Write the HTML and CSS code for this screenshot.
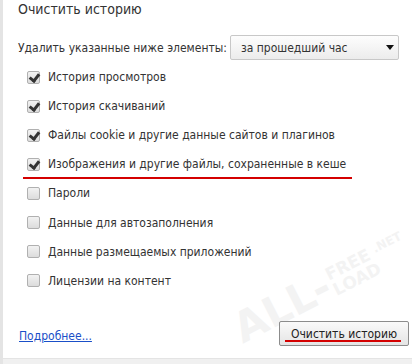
FILE: index.html
```html
<!DOCTYPE html>
<html>
<head>
<meta charset="utf-8">
<link rel="stylesheet" href="styles.css">
</head>
<body>
<div class="frame">
  <div class="dialog">
    <div class="title">Очистить историю</div>
    <div class="range">
      <span class="range-label">Удалить указанные ниже элементы:</span>
      <div class="select"><span>за прошедший час</span><span class="arrow"></span></div>
    </div>
    <ul class="items">
      <li><span class="cb on"></span><span>История просмотров</span></li>
      <li><span class="cb on"></span><span>История скачиваний</span></li>
      <li><span class="cb on"></span><span>Файлы cookie и другие данные сайтов и плагинов</span></li>
      <li class="marked"><span class="cb on"></span><span>Изображения и другие файлы, сохраненные в кеше</span></li>
      <li><span class="cb"></span><span>Пароли</span></li>
      <li><span class="cb"></span><span>Данные для автозаполнения</span></li>
      <li><span class="cb"></span><span>Данные размещаемых приложений</span></li>
      <li><span class="cb"></span><span>Лицензии на контент</span></li>
    </ul>
    <div class="footer">
      <a class="more" href="#">Подробнее...</a>
      <button class="clear"><span>Очистить историю</span></button>
    </div>
    <div class="watermark"><span class="wm-big">ALL-</span><span class="wm-stack"><span>FREE</span><span>LOAD</span></span><span class="wm-net">.NET</span></div>
  </div>
  <div class="bottom"></div>
</div>
</body>
</html>
```
FILE: styles.css
```css
* { box-sizing: border-box; }
html, body { margin: 0; padding: 0; background: #fff; }
body {
  width: 412px; height: 364px; overflow: hidden;
  font-family: "DejaVu Sans Condensed", "DejaVu Sans", sans-serif;
  font-stretch: condensed;
  font-size: 12px; color: #333;
}
.frame { border-left: 3px solid #e4e4e4; height: 364px; display: flex; flex-direction: column; }
.dialog { flex: 1; padding: 0 0 0 15px; position: relative; }
.title { font-size: 14px; color: #333; padding-top: 0; height: 35px; line-height: 18px; }
.range { display: flex; align-items: center; height: 25px; }
.range-label { width: 212px; white-space: nowrap; }
.select {
  width: 169px; height: 25px; border: 1px solid #c8c8c8; border-radius: 2px;
  background: linear-gradient(#fdfdfd, #ececec);
  display: flex; align-items: center; justify-content: space-between; padding: 0 4px 0 10px;
  position: relative; z-index: 1;
}
.arrow { width: 0; height: 0; border-left: 4px solid transparent; border-right: 4px solid transparent; border-top: 5px solid #111; margin-right: 0; }
.items { list-style: none; margin: 2.5px 0 0 0; padding: 0 0 0 9px; position: relative; z-index: 1; }
.items li { display: flex; align-items: center; height: 29.1px; gap: 8px; position: relative; }
.cb {
  width: 13px; height: 13px; border: 1px solid #b0b0b0; border-radius: 2px;
  background: linear-gradient(#f2f2f2, #dcdcdc); position: relative; flex: none;
}
.cb.on::after {
  content: ""; position: absolute; left: 3px; top: 0px; width: 4px; height: 7px;
  border-right: 3px solid #333; border-bottom: 3px solid #333; transform: rotate(38deg);
}
.marked::after {
  content: ""; position: absolute; left: -4px; width: 329px; bottom: 0px; height: 2px; background: #d40000;
}
.footer { display: flex; justify-content: space-between; align-items: center; margin-top: 26px; padding-right: 3px; position: relative; z-index: 1; }
.more { color: #1a4fc8; text-decoration: underline; padding-left: 1px; margin-top: 4px; }
.clear {
  font: inherit; color: #222; width: 130px; height: 25px; border: 1px solid #8c8c8c; border-radius: 2px;
  background: linear-gradient(#fafafa, #e4e4e4); padding: 0; position: relative;
}
.clear::after { content: ""; position: absolute; left: 5px; right: 7px; bottom: 3px; height: 2px; background: #d40000; }
.bottom { height: 6px; background: #f0f0f0; border-top: 1px solid #e4e4e4; }
.watermark {
  position: absolute; left: 243px; top: 308px; display: flex; align-items: center; gap: 2px;
  transform: rotate(-27deg); transform-origin: left bottom; color: #f3f3f3;
  font-family: "DejaVu Sans", sans-serif; font-weight: bold; font-stretch: normal; z-index: 0; line-height: 1;
}
.wm-big { font-size: 42px; }
.wm-stack { display: flex; flex-direction: column; font-size: 17px; }
.wm-net { font-size: 12px; align-self: flex-start; margin-top: 4px; }
```
